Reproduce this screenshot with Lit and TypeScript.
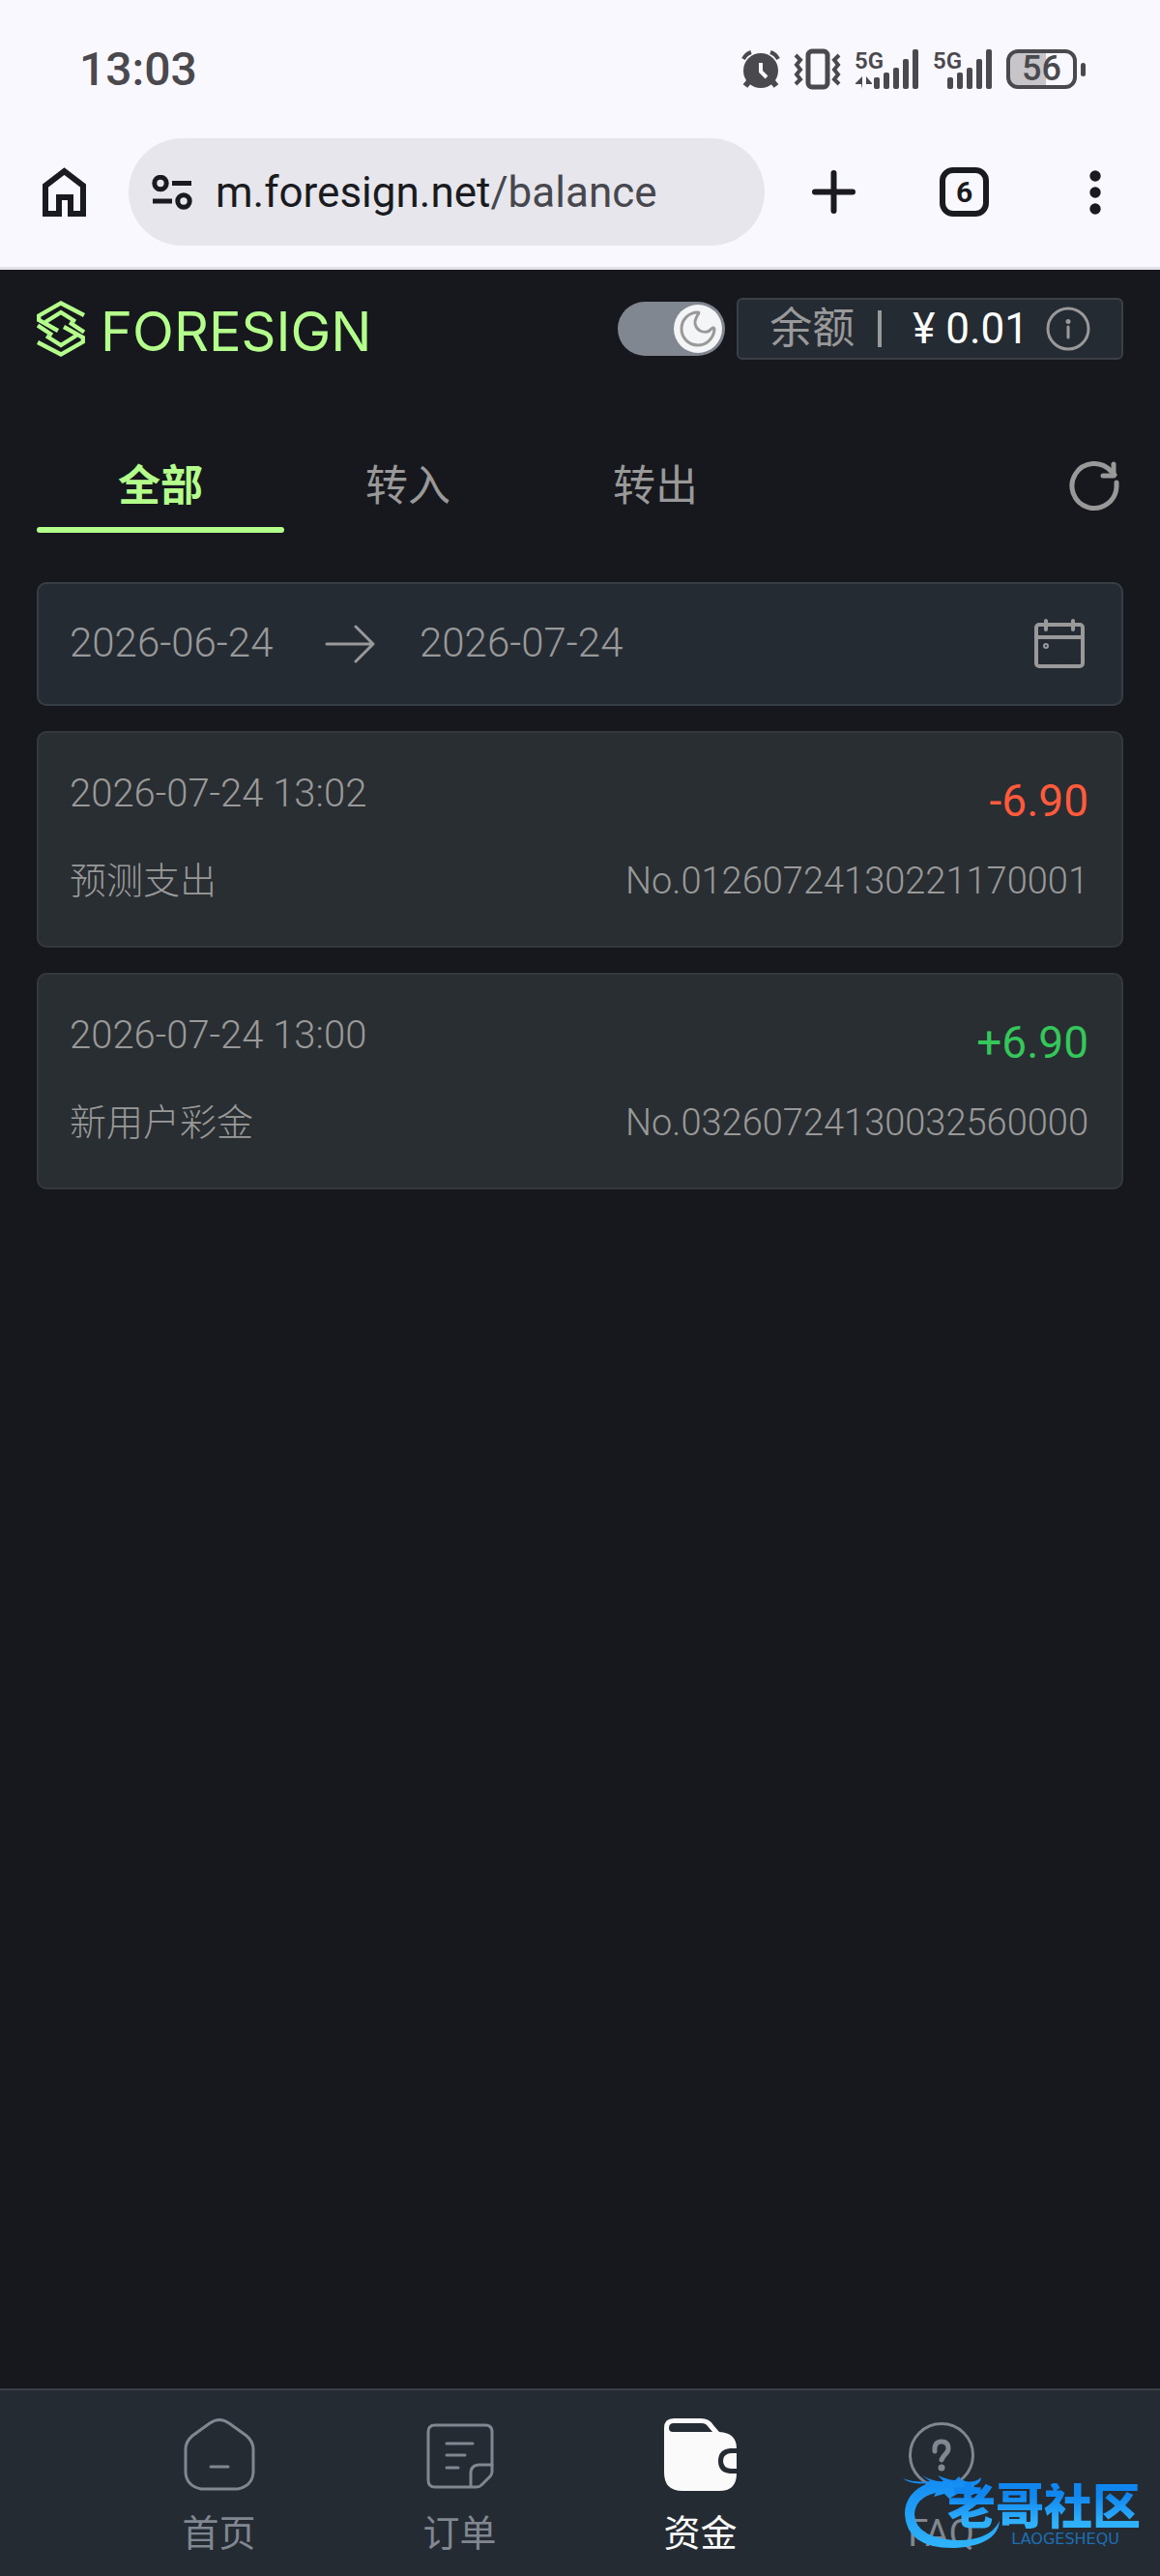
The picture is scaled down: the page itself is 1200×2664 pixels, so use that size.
import { css, html, LitElement, svg } from 'lit';
import { customElement, property, state } from 'lit/decorators.js';
import { classMap } from 'lit/directives/class-map.js';

const sansStack = css`Roboto, 'Noto Sans CJK SC', sans-serif`;

@customElement('status-bar')
class StatusBar extends LitElement {
  @property() time = '';
  @property() battery = '';

  bars(x: number) {
    return [12, 17, 22, 31, 41].map(
      (h, i) => svg`<rect x=${x + i * 10} y=${41 - h} width="6" height=${h} rx="2" />`,
    );
  }

  render() {
    return html`
      <time>${this.time}</time>
      <div class="icons">
        <svg width="40" height="41" viewBox="0 0 40 41">
          <circle cx="20" cy="22" r="18" />
          <path d="M8 33l-4 5M32 33l4 5" stroke="#4a494d" stroke-width="6" />
          <path d="M2 10a14 14 0 0 1 8-7M38 10a14 14 0 0 0-8-7" class="line" />
          <path d="M20 14v9l6 6" stroke="#faf8ff" stroke-width="4" fill="none" />
        </svg>
        <svg width="49" height="41" viewBox="0 0 49 41">
          <rect x="15" y="2" width="20" height="37" rx="4" class="line wide" />
          <path d="M2 6l5 5-4 5 4 5-4 5 4 5-5 5M47 6l-5 5 4 5-4 5 4 5-4 5 5 5" class="line" />
        </svg>
        <svg width="67" height="41" viewBox="0 0 67 41">
          <text x="0" y="20">5G</text>
          <path d="M8 41V28L1 35v1h6M12 41V28l6 7v1h-6" />
          ${this.bars(20)}
        </svg>
        <svg width="62" height="41" viewBox="0 0 62 41">
          <text x="0" y="20">5G</text>
          ${this.bars(15)}
        </svg>
        <span class="battery"><b>${this.battery}</b></span>
        <i class="nub"></i>
      </div>
    `;
  }

  static styles = css`
    :host {
      display: flex;
      align-items: center;
      justify-content: space-between;
      height: 143px;
      padding: 0 77px 0 82px;
      box-sizing: border-box;
      color: #4a494d;
      font-family: ${sansStack};
    }

    time {
      font-size: 48px;
      font-weight: 500;
    }

    .icons {
      display: flex;
      align-items: center;
      gap: 14px;
    }

    svg {
      overflow: visible;
      fill: #4a494d;
    }

    svg text {
      font-size: 24px;
      font-weight: 600;
    }

    .line {
      fill: none;
      stroke: #4a494d;
      stroke-width: 4;
    }

    .wide {
      stroke-width: 5;
    }

    .battery {
      display: flex;
      align-items: center;
      justify-content: center;
      width: 73px;
      height: 41px;
      box-sizing: border-box;
      border: 4px solid #4a494d;
      border-radius: 12px;
      background: linear-gradient(90deg, #c8c5ca 57%, transparent 57%);
    }

    .battery b {
      font-size: 36px;
      font-weight: 500;
      line-height: 33px;
    }

    .nub {
      width: 5px;
      height: 14px;
      margin-left: -10px;
      border-radius: 3px;
      background: #4a494d;
    }
  `;
}

@customElement('browser-bar')
class BrowserBar extends LitElement {
  @property() domain = '';
  @property() path = '';
  @property({ type: Number }) tabs = 0;

  render() {
    return html`
      <button class="home" aria-label="主页">
        <svg width="45" height="51" viewBox="0 0 45 51">
          <path d="M3 48V19L22.500 4 42 19v29H29V31H17v17z" />
        </svg>
      </button>
      <button class="address">
        <svg width="42" height="36" viewBox="0 0 42 36">
          <circle cx="9" cy="8.500" r="6.200" />
          <circle cx="33" cy="27" r="6.200" />
          <path d="M21 8.500h20M1 27h20" />
        </svg>
        <span class="url">${this.domain}<span class="path">${this.path}</span></span>
      </button>
      <button class="action" aria-label="新标签页">
        <svg width="45" height="45" viewBox="0 0 45 45">
          <path d="M22.500 3v39M3 22.500h39" stroke-linecap="round" />
        </svg>
      </button>
      <button class="action"><span class="count">${this.tabs}</span></button>
      <button class="action" aria-label="菜单">
        <svg class="dots" width="12" height="46" viewBox="0 0 12 46">
          <circle cx="6" cy="6" r="5.700" />
          <circle cx="6" cy="23" r="5.700" />
          <circle cx="6" cy="40" r="5.700" />
        </svg>
      </button>
    `;
  }

  static styles = css`
    :host {
      display: flex;
      align-items: center;
      padding-bottom: 22px;
      border-bottom: 3px solid #e3e2e9;
    }

    button {
      display: flex;
      align-items: center;
      justify-content: center;
      padding: 0;
      border: 0;
      background: none;
      color: #1a1b20;
      font-family: ${sansStack};
    }

    svg {
      flex: none;
      fill: none;
      stroke: #1a1b20;
      stroke-width: 6;
    }

    .home {
      width: 133px;
    }

    .address {
      flex: 1;
      justify-content: flex-start;
      gap: 24px;
      height: 111px;
      margin-right: 4px;
      padding: 0 24px;
      border-radius: 56px;
      background: #e7e6ec;
      font-size: 44px;
    }

    .address svg {
      stroke-width: 5;
    }

    .path {
      color: #47474e;
    }

    .action {
      width: 135px;
      height: 111px;
    }

    .count {
      width: 51px;
      height: 51px;
      box-sizing: border-box;
      border: 6px solid #1a1b20;
      border-radius: 14px;
      font-size: 30px;
      font-weight: 700;
      line-height: 39px;
    }

    .dots {
      fill: #1a1b20;
      stroke: none;
    }
  `;
}

@customElement('balance-header')
class BalanceHeader extends LitElement {
  @property() amount = '';

  render() {
    const half = svg`
      <path d="M49 15L25 2.500 2.200 15.500v4.500L22 31" />
      <path d="M40 21.500L25 12 9 22" />
      <path d="M1 25.500L16 35.500" />
    `;
    return html`
      <a class="logo" href="/">
        <svg width="50" height="58" viewBox="0 0 50 58">
          ${half}
          <g transform="rotate(180 25 29)">${half}</g>
        </svg>
        <span>FORESIGN</span>
      </a>
      <label class="toggle">
        <input type="checkbox" role="switch" aria-label="深色模式" checked />
        <span class="knob">
          <svg width="38" height="40" viewBox="0 0 38 40">
            <path d="M19 3C9 3 2 11 2 20s7 17 17 17c9 0 16-7 17-16 0-3-2-2-3-1-3 4-8 4-12 2-6-4-6-10-3-15 1-2 3-4 1-4z" />
          </svg>
        </span>
      </label>
      <div class="balance">
        <span>余额</span>
        <i class="bar"></i>
        <strong>¥ ${this.amount}</strong>
        <button aria-label="说明">
          <svg width="46" height="46" viewBox="0 0 46 46">
            <circle cx="23" cy="23" r="21" />
            <path d="M23 21v11" stroke-linecap="round" />
            <circle class="dot" cx="23" cy="15.500" r="2.500" />
          </svg>
        </button>
      </div>
    `;
  }

  static styles = css`
    :host {
      display: flex;
      align-items: center;
      padding: 29px 38px 0;
      color: #999;
      font-family: ${sansStack};
    }

    .logo {
      display: flex;
      align-items: center;
      gap: 16px;
      height: 64px;
      margin-right: auto;
      color: #b4ff8c;
      font-family: Inter, sans-serif;
      font-size: 56px;
      line-height: 64px;
      text-decoration: none;
    }

    .logo span {
      padding-top: 6px;
    }

    svg {
      display: block;
      fill: none;
      stroke: #999;
      stroke-width: 3;
    }

    .logo svg {
      stroke: #b4ff8c;
      stroke-width: 4.300;
    }

    .toggle {
      display: flex;
      justify-content: flex-end;
      width: 111px;
      height: 56px;
      box-sizing: border-box;
      margin-right: 12px;
      padding: 3px;
      border-radius: 28px;
      background: #808791;
    }

    .toggle input {
      width: 1px;
      height: 1px;
      margin: 0;
      appearance: none;
    }

    .knob {
      display: grid;
      place-items: center;
      width: 50px;
      height: 50px;
      border-radius: 50%;
      background: #f4f5f7;
    }

    .balance {
      display: flex;
      align-items: center;
      padding: 0 32px;
      border: 2px solid #3b4047;
      border-radius: 6px;
      background: #252b33;
      font-size: 44px;
      line-height: 60px;
    }

    .bar {
      width: 4px;
      height: 38px;
      margin: 0 32px 0 24px;
      background: #999;
    }

    strong {
      color: #fff;
      font-weight: 400;
    }

    button {
      margin-left: 18px;
      padding: 0;
      border: 0;
      background: none;
    }

    .dot {
      fill: #999;
      stroke: none;
    }
  `;
}

@customElement('record-card')
class RecordCard extends LitElement {
  @property() date = '';
  @property() amount = '';
  @property() label = '';
  @property() number = '';

  render() {
    return html`
      <div class="row">
        <time>${this.date}</time>
        <span class=${classMap({ amount: true, income: this.amount.startsWith('+') })}>
          ${this.amount}
        </span>
      </div>
      <div class="row">
        <span>${this.label}</span>
        <span>${this.number}</span>
      </div>
    `;
  }

  static styles = css`
    :host {
      display: flex;
      flex-direction: column;
      gap: 30px;
      padding: 40px 34px 42px 32px;
      border: 2px solid #34393d;
      border-radius: 10px;
      background: #292e32;
      color: #999;
      font-family: ${sansStack};
      font-size: 38px;
      font-weight: 300;
      line-height: 46px;
    }

    .row {
      display: flex;
      justify-content: space-between;
    }

    .row + .row {
      padding-bottom: 2px;
    }

    time {
      font-size: 40px;
    }

    .amount {
      color: #ff5a3c;
      font-size: 46px;
      font-weight: 400;
      line-height: 60px;
    }

    .income {
      color: #34c759;
    }
  `;
}

@customElement('bottom-nav')
class BottomNav extends LitElement {
  render() {
    return html`
      <nav>
        <a href="/">
          <svg width="76" height="76" viewBox="0 0 76 76">
            <path d="M28 6q10-7 20 0l18 13q7 6 7 14v24q-1 14-16 17H19Q4 71 3 57V33q0-8 7-14z" />
            <path d="M29 51h18" />
          </svg>
          首页
        </a>
        <a href="/orders">
          <svg width="76" height="76" viewBox="0 0 76 76">
            <path d="M12 8h52q7 0 7 7v41q0 3-2 5l-9 9q-2 2-5 2H12q-7 0-7-7V15q0-7 7-7z" />
            <path d="M49 71V58q0-9 9-9h13M24 27h27M24 39h19M24 52h12" />
          </svg>
          订单
        </a>
        <a href="/balance" class="active">
          <svg width="76" height="76" viewBox="0 0 76 76">
            <path
              class="solid"
              fill-rule="evenodd"
              d="M10 1h28q9 0 13 7l6 7q18 1 18 17H68q-12 1-12 13t12 13h7q0 18-18 18H19Q0 76 0 57V11Q0 1 10 1zM10 6q-5 0-5 5 0 4 4 4h41l-5-6q-2-3-6-3z"
            />
            <path class="solid" d="M75 37v16h-6q-8-1-8-8t8-8z" />
          </svg>
          资金
        </a>
        <a href="/faq">
          <svg width="76" height="76" viewBox="0 0 76 76">
            <circle cx="38" cy="39" r="32.500" />
            <path class="thick" d="M31 35q-1-10 7-10 7 0 7 7 0 3-3 6t-4 6" />
            <circle class="solid" cx="38" cy="52" r="3.500" />
          </svg>
          FAQ
        </a>
      </nav>
      <div class="watermark">
        <svg width="100" height="78" viewBox="0 0 100 78">
          <defs>
            <linearGradient id="blue" x2="0" y2="1">
              <stop offset="0" stop-color="#1289f2" />
              <stop offset="1" stop-color="#2fb4fa" />
            </linearGradient>
          </defs>
          <path
            fill="url(#blue)"
            d="M0 5q12 5 28 3L20 2q12 7 22 6l-6-6q12 5 18 5l4-4q2 4 7 5 9 2 16-4 0 6-8 9l6 4-12 1 7 4q-10 0-16-2l-10 6-5-5-11 3 2-4Q13 25 12 42q1 24 42 27 36 1 46-20-2 25-46 28Q4 78 2 42 2 20 26 10 8 12 0 5z"
          />
        </svg>
        <div class="mark">
          <b>老哥社区</b>
          <small>LAOGESHEQU</small>
        </div>
      </div>
    `;
  }

  static styles = css`
    :host {
      display: block;
      position: relative;
      margin-top: auto;
      border-top: 2px solid #3b4147;
      background: #252b33;
      font-family: ${sansStack};
    }

    nav {
      display: grid;
      grid-template-columns: repeat(4, 1fr);
      padding: 28px 102px 18px;
    }

    a {
      display: flex;
      flex-direction: column;
      align-items: center;
      gap: 18px;
      color: #808791;
      font-size: 38px;
      line-height: 52px;
      text-decoration: none;
    }

    nav svg {
      fill: none;
      stroke: #808791;
      stroke-width: 3;
      stroke-linecap: round;
    }

    nav .solid {
      fill: #808791;
      stroke: none;
    }

    .thick {
      stroke-width: 5;
    }

    .active {
      color: #fafafa;
    }

    .active .solid {
      fill: #fafafa;
    }

    .watermark {
      display: flex;
      align-items: center;
      position: absolute;
      right: 20px;
      bottom: 28px;
      pointer-events: none;
    }

    .mark {
      display: flex;
      flex-direction: column;
      align-items: center;
      margin-left: -54px;
      padding-top: 8px;
    }

    .mark b {
      background: linear-gradient(#0f86f0 25%, #2fb0fa 80%);
      background-clip: text;
      color: transparent;
      font-size: 50px;
      font-weight: 900;
      line-height: 50px;
    }

    .mark small {
      align-self: flex-end;
      padding-right: 22px;
      color: #1c6fb4;
      font-family: 'DejaVu Sans', sans-serif;
      font-size: 16px;
      line-height: 16px;
    }
  `;
}

@customElement('app-root')
class AppRoot extends LitElement {
  @state() tab = '全部';

  tabs = ['全部', '转入', '转出'];

  records = [
    {
      date: '2026-07-24 13:02',
      amount: '-6.90',
      label: '预测支出',
      number: 'No.01260724130221170001',
    },
    {
      date: '2026-07-24 13:00',
      amount: '+6.90',
      label: '新用户彩金',
      number: 'No.03260724130032560000',
    },
  ];

  render() {
    return html`
      <div class="browser">
        <status-bar time="13:03" battery="56"></status-bar>
        <browser-bar domain="m.foresign.net" path="/balance" tabs="6"></browser-bar>
      </div>
      <balance-header amount="0.01"></balance-header>
      <main>
        <div class="tabs">
          ${this.tabs.map(
            (name) => html`
              <button
                class=${classMap({ tab: true, selected: name === this.tab })}
                @click=${() => (this.tab = name)}
              >
                ${name}
              </button>
            `,
          )}
          <button class="refresh" aria-label="刷新">
            <svg width="52" height="52" viewBox="0 0 52 52">
              <path d="M49 22v4A23 23 0 1 1 43 10l4 4" />
              <path d="M46 3v12H35" />
            </svg>
          </button>
        </div>
        <div class="range">
          <input aria-label="开始日期" value="2026-06-24" />
          <svg width="52" height="40" viewBox="0 0 52 40">
            <path d="M2 20h48M32 2l18 18-18 18" />
          </svg>
          <input aria-label="结束日期" value="2026-07-24" />
          <button class="calendar" aria-label="选择日期">
            <svg width="52" height="52" viewBox="0 0 52 52">
              <rect x="2" y="6" width="48" height="43" rx="3" />
              <path d="M3 19h46M12 2v9M40 2v9" />
              <circle cx="12" cy="28" r="1" />
            </svg>
          </button>
        </div>
        ${this.records.map(
          (r) => html`
            <record-card
              date=${r.date}
              amount=${r.amount}
              label=${r.label}
              number=${r.number}
            ></record-card>
          `,
        )}
      </main>
      <bottom-nav></bottom-nav>
    `;
  }

  static styles = css`
    :host {
      display: flex;
      flex-direction: column;
      min-height: 100vh;
      background: #17181d;
      font-family: ${sansStack};
    }

    .browser {
      background: #faf8ff;
    }

    main {
      display: flex;
      flex-direction: column;
      gap: 26px;
      padding: 79px 38px 40px;
    }

    button {
      padding: 0;
      border: 0;
      background: none;
      font-family: inherit;
    }

    svg {
      display: block;
      fill: none;
      stroke: #999;
      stroke-width: 3;
      stroke-linecap: round;
      stroke-linejoin: round;
    }

    .tabs {
      display: flex;
      align-items: center;
      margin-bottom: 25px;
    }

    .tab {
      position: relative;
      width: 256px;
      height: 100px;
      padding-bottom: 4px;
      color: #999;
      font-size: 44px;
    }

    .selected {
      color: #b4ff8c;
      font-weight: 700;
    }

    .selected::after {
      content: '';
      position: absolute;
      right: 0;
      bottom: 0;
      left: 0;
      height: 6px;
      border-radius: 3px;
      background: #b4ff8c;
    }

    .refresh {
      margin-left: auto;
      padding: 4px 4px 0 0;
    }

    .refresh svg {
      stroke-width: 5;
    }

    .range {
      display: flex;
      align-items: center;
      gap: 46px;
      padding: 36px 38px 36px 32px;
      border: 2px solid #373e45;
      border-radius: 10px;
      background: #242b33;
    }

    .calendar svg {
      stroke-width: 4;
    }

    input {
      width: 218px;
      height: 52px;
      padding: 0 0 4px;
      box-sizing: border-box;
      border: 0;
      background: none;
      color: #999;
      font-family: inherit;
      font-size: 42px;
      font-weight: 300;
    }

    .calendar {
      margin-left: auto;
    }
  `;
}
